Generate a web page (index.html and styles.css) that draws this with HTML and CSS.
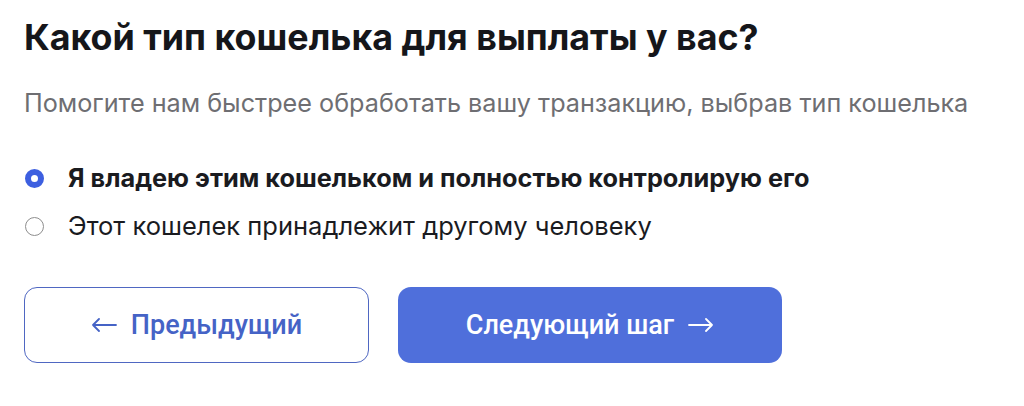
FILE: index.html
```html
<!DOCTYPE html>
<html lang="ru">
<head>
<meta charset="utf-8">
<link rel="stylesheet" href="styles.css">
</head>
<body>
<main class="page">
  <h1 class="title">Какой тип кошелька для выплаты у вас?</h1>
  <p class="subtitle">Помогите нам быстрее обработать вашу транзакцию, выбрав тип кошелька</p>
  <div class="options">
    <label class="option option--checked">
      <span class="radio radio--on"></span>
      <span class="option-text">Я владею этим кошельком и полностью контролирую его</span>
    </label>
    <label class="option">
      <span class="radio"></span>
      <span class="option-text">Этот кошелек принадлежит другому человеку</span>
    </label>
  </div>
  <div class="actions">
    <button class="btn btn--outline">
      <svg class="arrow" width="26" height="14" viewBox="0 0 26 14"><path d="M25 7H2M8 1L2 7l6 6" fill="none" stroke="currentColor" stroke-width="1.8" stroke-linecap="round" stroke-linejoin="round"/></svg>
      <span>Предыдущий</span>
    </button>
    <button class="btn btn--primary">
      <span>Следующий шаг</span>
      <svg class="arrow" width="26" height="14" viewBox="0 0 26 14"><path d="M1 7h23M18 1l6 6-6 6" fill="none" stroke="currentColor" stroke-width="1.8" stroke-linecap="round" stroke-linejoin="round"/></svg>
    </button>
  </div>
</main>
</body>
</html>
```

FILE: styles.css
```css
html, body {
  margin: 0;
  padding: 0;
  background: #ffffff;
}
body {
  font-family: Inter, "Noto Sans", sans-serif;
  color: #15161a;
}
.page {
  padding: 15px 24px 0 24px;
  display: flex;
  flex-direction: column;
}
.title {
  margin: 0;
  font-size: 35.8px;
  line-height: 44px;
  font-weight: 700;
}
.subtitle {
  margin: 28px 0 0 0;
  font-size: 25.2px;
  line-height: 32px;
  color: #6e6e72;
}
.options {
  margin-top: 43px;
  display: flex;
  flex-direction: column;
  gap: 16px;
}
.option {
  display: flex;
  align-items: center;
  gap: 24px;
  font-size: 25.5px;
  line-height: 32px;
  color: #1a1b1f;
}
.option--checked {
  font-weight: 700;
  font-size: 25.3px;
}
.radio {
  width: 17px;
  height: 17px;
  border-radius: 50%;
  border: 1.5px solid #8e8e8e;
  box-sizing: content-box;
  flex: none;
  margin-left: 1px;
}
.radio--on {
  border: 6.5px solid #3d5fe0;
  width: 7px;
  height: 7px;
  background: #fff;
}
.actions {
  margin-top: 45px;
  display: flex;
  gap: 29px;
}
.btn {
  height: 76px;
  border-radius: 13px;
  font-family: Roboto, Inter, sans-serif;
  font-size: 27px;
  font-weight: 500;
  cursor: pointer;
  display: flex;
  align-items: center;
  justify-content: center;
  gap: 14px;
  padding: 0;
}
.btn--outline {
  width: 345px;
  background: #fff;
  border: 1.5px solid #4f67c2;
  color: #4563c6;
}
.btn--primary {
  width: 384px;
  background: #4f6fdb;
  border: none;
  color: #fff;
}
.arrow {
  flex: none;
}
```
